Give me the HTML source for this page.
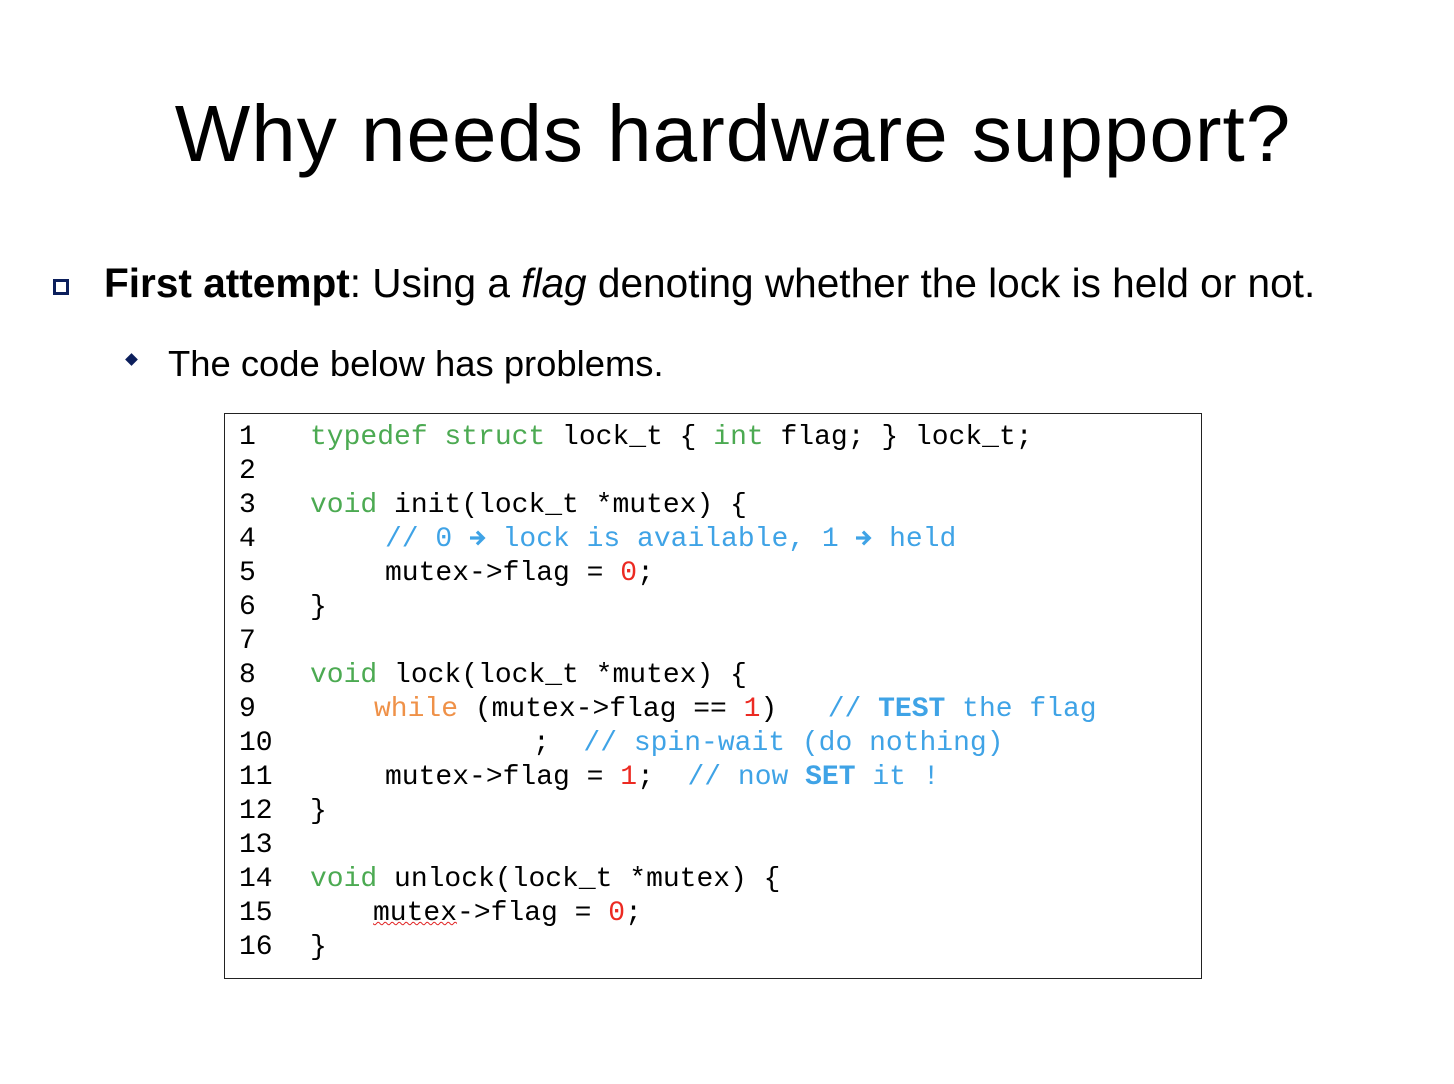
<!DOCTYPE html>
<html><head><meta charset="utf-8"><style>
body{margin:0;width:1454px;height:1084px;background:#fff;position:relative;overflow:hidden;font-family:"Liberation Sans",sans-serif;color:#000}
.t{position:absolute;left:0;width:1454px;top:86px;text-align:center;font-size:80px;line-height:96px;letter-spacing:1px;padding-left:6px}
.b1{position:absolute;left:104px;top:259px;font-size:40.6px;line-height:48px;white-space:nowrap}
.sq{position:absolute;left:53px;top:279px;width:10px;height:10px;border:3px solid #0c1f5c}
.b2{position:absolute;left:168px;top:342px;font-size:36.4px;line-height:44px;white-space:nowrap}
.dia{position:absolute;left:127px;top:355px;width:9px;height:9px;background:#0c1f5c;transform:rotate(45deg)}
.box{position:absolute;left:224px;top:413px;width:976px;height:564px;border:1.5px solid #222}
.l{position:absolute;font-family:"Liberation Mono",monospace;font-size:28px;line-height:34px;white-space:pre}
.g{color:#4caa52}.c{color:#3fa3e6}.o{color:#ef9148}.r{color:#ec2a22}
.sq2{text-decoration:underline wavy #e02020;text-decoration-thickness:1px}
.ar{display:inline-block;width:16.8px;height:20px;vertical-align:-2px}
</style></head><body>
<div class="t">Why needs hardware support?</div>
<div class="sq"></div>
<div class="b1"><b>First attempt</b>: Using a <i>flag</i> denoting whether the lock is held or not.</div>
<div class="dia"></div>
<div class="b2">The code below has problems.</div>
<div class="box"></div>
<div class="l" style="left:239px;top:421px">1
2
3
4
5
6
7
8
9
10
11
12
13
14
15
16</div>
<div class="l" style="left:310px;top:421px"><span class="g">typedef struct</span> lock_t { <span class="g">int</span> flag; } lock_t;</div>
<div class="l" style="left:310px;top:489px"><span class="g">void</span> init(lock_t *mutex) {</div>
<div class="l c" style="left:385px;top:523px">// 0 <svg class="ar" viewBox="0 0 17 20"><path d="M1 10H14M8 3.5L14.5 10L8 16.5" fill="none" stroke="#3fa3e6" stroke-width="3.2"/></svg> lock is available, 1 <svg class="ar" viewBox="0 0 17 20"><path d="M1 10H14M8 3.5L14.5 10L8 16.5" fill="none" stroke="#3fa3e6" stroke-width="3.2"/></svg> held</div>
<div class="l" style="left:385px;top:557px">mutex-&gt;flag = <span class="r">0</span>;</div>
<div class="l" style="left:310px;top:591px">}</div>
<div class="l" style="left:310px;top:659px"><span class="g">void</span> lock(lock_t *mutex) {</div>
<div class="l" style="left:374px;top:693px"><span class="o">while</span> (mutex-&gt;flag == <span class="r">1</span>)   <span class="c">// <b>TEST</b> the flag</span></div>
<div class="l" style="left:533px;top:727px">;  <span class="c">// spin-wait (do nothing)</span></div>
<div class="l" style="left:385px;top:761px">mutex-&gt;flag = <span class="r">1</span>;  <span class="c">// now <b>SET</b> it !</span></div>
<div class="l" style="left:310px;top:795px">}</div>
<div class="l" style="left:310px;top:863px"><span class="g">void</span> unlock(lock_t *mutex) {</div>
<div class="l" style="left:373px;top:897px"><span class="sq2">mutex</span>-&gt;flag = <span class="r">0</span>;</div>
<div class="l" style="left:310px;top:931px">}</div>
</body></html>
